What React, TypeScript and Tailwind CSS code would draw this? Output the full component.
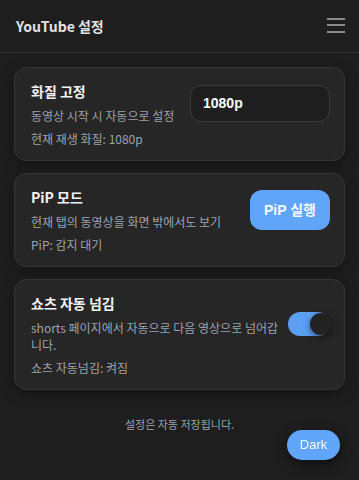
import React, { useState } from "react";

const KR = "font-['Noto_Sans_CJK_KR','Noto_Sans',sans-serif]";

export default function App() {
  const [on, setOn] = useState(true);
  return (
    <div className={`min-h-[480px] w-full bg-[#1e1e1e] ${KR} text-[#e8e8e8]`}>
      <header className="flex h-[53px] items-center justify-between border-b border-[#333333] pl-4 pr-[14px]">
        <h1 className="text-[14px] font-bold text-[#e2e2e2]">YouTube 설정</h1>
        <button className="flex w-[18px] flex-col gap-[4.5px] mt-[-2px]">
          <span className="block h-[2px] w-full bg-[#8a8a8a]" />
          <span className="block h-[2px] w-full bg-[#8a8a8a]" />
          <span className="block h-[2px] w-full bg-[#8a8a8a]" />
        </button>
      </header>

      <main className="flex flex-col gap-3 px-[14px] pt-[14px]">
        <section className="flex items-start justify-between rounded-[12px] border border-[#363636] bg-[#262626] pl-4 pr-[14px] pt-[13px] pb-[12px] shadow-[0_4px_14px_rgba(0,0,0,0.35)]">
          <div className="flex flex-col">
            <h2 className="text-[14px] font-bold leading-[20px] text-[#f2f2f2]">화질 고정</h2>
            <p className="mt-[6px] text-[12px] leading-[18px] text-[#9ba3ad]">동영상 시작 시 자동으로 설정</p>
            <p className="mt-[5px] text-[12px] leading-[18px] text-[#9ba3ad]">현재 재생 화질: 1080p</p>
          </div>
          <div className="mt-[4px] flex h-[37px] w-[140px] items-center rounded-[11px] border border-[#3a3a3a] bg-[#1e1e1e] pl-[12px] font-['Liberation_Sans',sans-serif] text-[14px] font-bold text-white">
            1080p
          </div>
        </section>

        <section className="flex items-start justify-between rounded-[12px] border border-[#363636] bg-[#262626] pl-4 pr-[14px] pt-[13px] pb-[12px] shadow-[0_4px_14px_rgba(0,0,0,0.35)]">
          <div className="flex flex-col">
            <h2 className="text-[14px] font-bold leading-[20px] text-[#f2f2f2]">PiP 모드</h2>
            <p className="mt-[6px] text-[12px] leading-[18px] text-[#9ba3ad]">현재 탭의 동영상을 화면 밖에서도 보기</p>
            <p className="mt-[5px] text-[12px] leading-[18px] text-[#9ba3ad]">PiP: 감지 대기</p>
          </div>
          <button className="mt-[3px] flex h-[40px] w-[80px] shrink-0 items-center justify-center rounded-[12px] bg-[#60a5fa] text-[14px] font-bold text-[#f4f8ff] font-['Liberation_Sans','Noto_Sans_CJK_KR',sans-serif]">
            PiP 실행
          </button>
        </section>

        <section className="flex items-start justify-between rounded-[12px] border border-[#363636] bg-[#262626] pl-4 pr-[14px] pt-[13px] pb-[12px] shadow-[0_4px_14px_rgba(0,0,0,0.35)]">
          <div className="flex w-[252px] flex-col">
            <h2 className="text-[14px] font-bold leading-[20px] text-[#f2f2f2]">쇼츠 자동 넘김</h2>
            <p className="mt-[6px] text-[12px] leading-[17px] text-[#9ba3ad]">shorts 페이지에서 자동으로 다음 영상으로 넘어갑니다.</p>
            <p className="mt-[6px] text-[12px] leading-[18px] text-[#9ba3ad]">쇼츠 자동넘김: 켜짐</p>
          </div>
          <button
            onClick={() => setOn(!on)}
            className="relative mt-[19px] h-[24px] w-[42px] shrink-0 rounded-full bg-[#5b9ef2]"
          >
            <span className="absolute right-[-2px] top-[1px] h-[22px] w-[22px] rounded-full bg-[#222222] shadow-[0_2px_6px_rgba(0,0,0,0.5)]" />
          </button>
        </section>

        <p className="mt-[14px] text-center text-[11px] text-[#9ba3ad]">설정은 자동 저장됩니다.</p>
      </main>

      <button className="fixed bottom-[20px] right-[19px] flex h-[30px] w-[53px] items-center justify-center rounded-full bg-[#60a5fa] font-['Liberation_Sans',sans-serif] text-[13px] text-[#f4f8ff] shadow-[0_4px_12px_rgba(0,0,0,0.5)]">
        Dark
      </button>
    </div>
  );
}
